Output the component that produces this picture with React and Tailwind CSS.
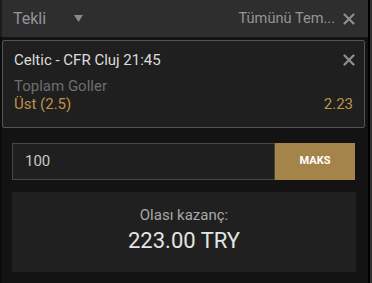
import { X } from 'lucide-react'

export default function App() {
    return (
        <div className="w-[372px] h-[283px] bg-black flex font-['Roboto',sans-serif] overflow-hidden">
            <div className="w-[368px] flex flex-col bg-[#131313]">
                {/* Header */}
                <div className="h-[37px] shrink-0 bg-[#2e2e2e] border-l-2 border-[#1c1c1c] flex items-center pl-[11px] pr-[10px] text-[15px] text-[#959595]">
                    <span className="text-[16px]">Tekli</span>
                    <svg width="9" height="7" viewBox="0 0 9 7" className="ml-[28px]">
                        <path d="M0 0 H9 L4.5 7 Z" fill="#8a8a8a" />
                    </svg>
                    <span className="ml-auto text-[14.6px]">Tümünü Tem...</span>
                    <X size={18} strokeWidth={3} className="ml-[5px] text-[#8c8c8c]" />
                </div>

                <div className="flex-1 border-l-2 border-[#0c0c0c] pt-[3px]">
                    {/* Bet card */}
                    <div className="w-[363px] h-[88px] bg-[#1f1f1f] border border-[#555] rounded-[2px] px-[11px] pt-[10px]">
                        <div className="flex items-center justify-between">
                            <span className="text-[15px] leading-[18px] text-[#dcdcdc]">Celtic - CFR Cluj 21:45</span>
                            <X size={18} strokeWidth={3} className="text-[#8f8f8f] -mr-[5px]" />
                        </div>
                        <div className="mt-[8px] text-[15px] leading-[18px] text-[#6e6e6e]">Toplam Goller</div>
                        <div className="flex justify-between text-[15px] leading-[18px] text-[#be9147]">
                            <span>Üst (2.5)</span>
                            <span>2.23</span>
                        </div>
                    </div>

                    {/* Stake */}
                    <div className="ml-[10px] mt-[15px] w-[343px] h-[37px] flex">
                        <div className="flex-1 bg-[#1f1f1f] border border-[#474747] flex items-center pl-[12px] text-[15px] text-[#c8c8c8]">100</div>
                        <button className="w-[80px] bg-[#a5844a] text-white text-[11px] font-bold">MAKS</button>
                    </div>

                    {/* Potential win */}
                    <div className="ml-[10px] mt-[12px] w-[344px] h-[80px] bg-[#202020] flex flex-col items-center pt-[14px]">
                        <div className="text-[15px] text-[#a8a8a8] leading-[18px]">Olası kazanç:</div>
                        <div className="mt-[4px] text-[22px] text-[#e4e4e4] leading-[26px]">223.00 TRY</div>
                    </div>
                </div>
            </div>
            <div className="w-[2px]" />
            <div className="w-[2px] bg-[#333]" />
        </div>
    )
}
